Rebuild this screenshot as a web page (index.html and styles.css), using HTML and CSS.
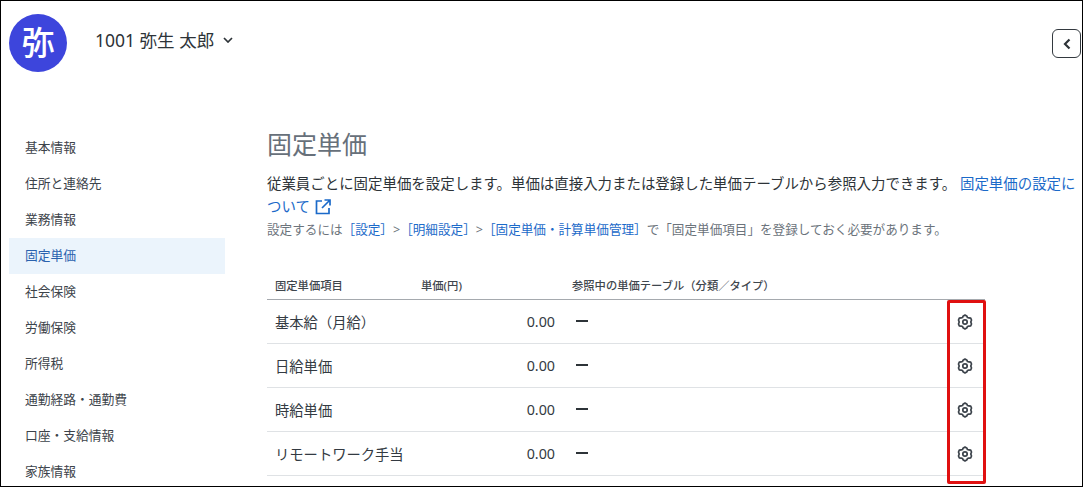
FILE: index.html
```html
<!DOCTYPE html>
<html lang="ja">
<head>
<meta charset="utf-8">
<title>固定単価</title>
<link rel="stylesheet" href="styles.css">
</head>
<body>
<div class="frame">
  <header class="header">
    <div class="avatar">弥</div>
    <div class="name">1001 弥生 太郎
      <svg class="chev" width="10" height="6" viewBox="0 0 10 6"><path d="M1 1l4 4 4-4" fill="none" stroke="#2d3338" stroke-width="1.700"/></svg>
    </div>
    <button class="collapse"><svg width="10" height="12" viewBox="0 0 10 12"><path d="M7.500 1.500L3 6l4.500 4.500" fill="none" stroke="#2d3338" stroke-width="2.200"/></svg></button>
  </header>
  <div class="body">
    <nav class="side">
      <a class="item">基本情報</a>
      <a class="item">住所と連絡先</a>
      <a class="item">業務情報</a>
      <a class="item active">固定単価</a>
      <a class="item">社会保険</a>
      <a class="item">労働保険</a>
      <a class="item">所得税</a>
      <a class="item">通勤経路・通勤費</a>
      <a class="item">口座・支給情報</a>
      <a class="item">家族情報</a>
    </nav>
    <main class="main">
      <h1 class="title">固定単価</h1>
      <p class="lead">従業員ごとに固定単価を設定します。単価は直接入力または登録した単価テーブルから参照入力できます。 <a class="link">固定単価の設定に</a><a class="link">ついて <svg class="ext" width="16" height="16" viewBox="0 0 16 16"><path d="M7 2H1.500v12.500H14V9M9.500 1H15v5.500M15 1L7 9" fill="none" stroke="#1b6ac9" stroke-width="1.700"/></svg></a></p>
      <p class="note">設定するには<a class="link">［設定］</a>&gt;<a class="link">［明細設定］</a>&gt;<a class="link">［固定単価・計算単価管理］</a>で「固定単価項目」を登録しておく必要があります。</p>
      <div class="row head">
        <div class="c1">固定単価項目</div><div class="c2">単価(円)</div><div class="c3">参照中の単価テーブル（分類／タイプ）</div>
      </div>
      <div class="row">
        <div class="c1">基本給（月給）</div><div class="c2 num">0.00</div><div class="c3"><span class="dash"></span></div>
        <svg class="gear" viewBox="0 0 16 16"><use href="#g"/></svg>
      </div>
      <div class="row">
        <div class="c1">日給単価</div><div class="c2 num">0.00</div><div class="c3"><span class="dash"></span></div>
        <svg class="gear" viewBox="0 0 16 16"><use href="#g"/></svg>
      </div>
      <div class="row">
        <div class="c1">時給単価</div><div class="c2 num">0.00</div><div class="c3"><span class="dash"></span></div>
        <svg class="gear" viewBox="0 0 16 16"><use href="#g"/></svg>
      </div>
      <div class="row">
        <div class="c1">リモートワーク手当</div><div class="c2 num">0.00</div><div class="c3"><span class="dash"></span></div>
        <svg class="gear" viewBox="0 0 16 16"><use href="#g"/></svg>
      </div>
    </main>
  </div>
  <div class="redbox"></div>
</div>
<svg width="0" height="0" class="defs"><defs><g id="g" fill="none" stroke="#3c434b" stroke-width="1.700"><path d="M8 1l2 1.200 .4 1.300 1.400 .3 1.900 .4L14.500 6 13.800 8l.7 2-.8 1.800-1.900 .4-1.400 .3-.4 1.300L8 15l-2-1.200-.4-1.300-1.400-.3-1.900-.4L1.500 10l.7-2-.7-2 .8-1.800 1.900-.4 1.400-.3 .4-1.300z" stroke-linejoin="round"/><circle cx="8" cy="8" r="2.200"/></g></defs></svg>
</body>
</html>
```
FILE: styles.css
```css
* { box-sizing: border-box; }
html, body { margin: 0; padding: 0; height: 487px; overflow: hidden; background: #fff; }
body { font-family: "Noto Sans", "Noto Sans CJK JP", sans-serif; color: #333a42; }
.frame { position: relative; width: 1083px; height: 487px; border: 1px solid #000; overflow: hidden; }
.header { display: flex; align-items: flex-start; height: 124px; padding: 13px 1px 0 8px; }
.avatar { width: 58px; height: 58px; border-radius: 50%; background: #3d45dc; color: #fff; font-size: 33px; font-weight: 500; line-height: 58px; text-align: center; }
.name { margin: 12px 0 0 28px; font-size: 17.500px; line-height: 28px; color: #2d3338; flex: 1; }
.chev { margin-left: 4px; vertical-align: 4px; }
.collapse { width: 29px; height: 29px; margin-top: 15px; padding: 0; border: 1px solid #33393f; border-radius: 6px; background: #fff; display: flex; align-items: center; justify-content: center; }
.body { display: flex; }
.side { width: 216px; margin: 5px 0 0 8px; flex: none; display: flex; flex-direction: column; }
.item { height: 36px; line-height: 34px; padding-left: 16px; font-size: 12.750px; color: #3c434a; }
.item.active { background: #ebf4fc; color: #2a62ae; }
.main { margin-left: 42px; width: 810px; }
.title { margin: 0; font-size: 25px; font-weight: 400; line-height: 38px; color: #67707a; }
.lead { margin: 9px 0 0; font-size: 14.440px; line-height: 23px; color: #2d3338; }
.link { color: #1b6ac9; }
.ext { vertical-align: -3px; margin-left: 1px; }
.note { margin: 2px 0 0; font-size: 12.600px; line-height: 20px; color: #6b737b; }
.row { display: flex; align-items: center; width: 718px; height: 44px; border-bottom: 1px solid #dfe2e5; font-size: 14.300px; position: relative; }
.c1 { width: 146px; padding-left: 8px; flex: none; }
.c2 { width: 144px; flex: none; }
.num { padding-right: 2px; text-align: right; }
.c3 { padding-left: 20px; }
.dash { display: block; width: 12px; height: 2px; background: #2d3338; margin: -1px 0 0 -1px; }
.head { margin-top: 30px; height: 30px; border-bottom: 1px solid #a5a9ae; font-size: 11.300px; font-weight: 500; color: #3f464d; }
.head .c3 { padding-left: 8px; }
.head .c2 { width: 143px; }
.head .c1 { width: 154px; }
.gear { position: absolute; left: 690px; top: 14px; width: 16px; height: 16px; }
.redbox { position: absolute; left: 946px; top: 299px; width: 39px; height: 184px; border: 3px solid #e01010; border-radius: 2px; }
.defs { position: absolute; }
```
